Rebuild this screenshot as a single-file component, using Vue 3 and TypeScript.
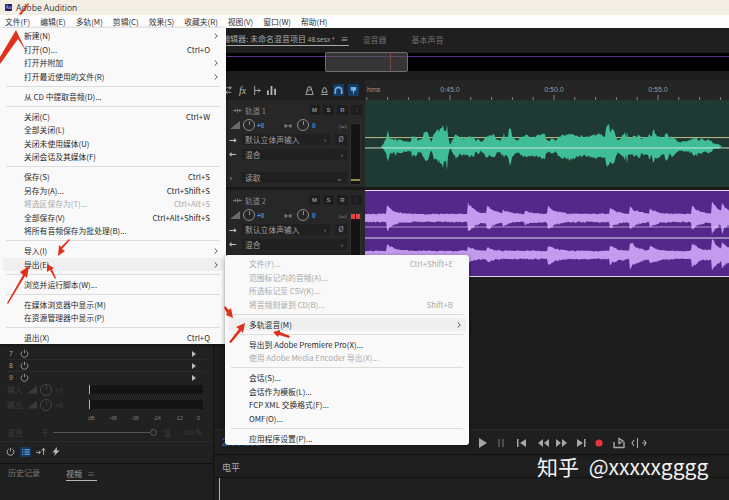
<script setup lang="ts">
interface MenuRow {
  label?: string
  shortcut?: string
  arrow?: boolean
  disabled?: boolean
  active?: boolean
  sep?: boolean
}

const menuBar = ['文件(F)', '编辑(E)', '多轨(M)', '剪辑(C)', '效果(S)', '收藏夹(R)', '视图(V)', '窗口(W)', '帮助(H)']

const fileMenu: MenuRow[] = [
  { label: '新建(N)', arrow: true },
  { label: '打开(O)...', shortcut: 'Ctrl+O' },
  { label: '打开并附加', arrow: true },
  { label: '打开最近使用的文件(R)', arrow: true },
  { sep: true },
  { label: '从 CD 中提取音频(D)...' },
  { sep: true },
  { label: '关闭(C)', shortcut: 'Ctrl+W' },
  { label: '全部关闭(L)' },
  { label: '关闭未使用媒体(U)' },
  { label: '关闭会话及其媒体(F)' },
  { sep: true },
  { label: '保存(S)', shortcut: 'Ctrl+S' },
  { label: '另存为(A)...', shortcut: 'Ctrl+Shift+S' },
  { label: '将选区保存为(T)...', shortcut: 'Ctrl+Alt+S', disabled: true },
  { label: '全部保存(V)', shortcut: 'Ctrl+Alt+Shift+S' },
  { label: '将所有音频保存为批处理(B)...' },
  { sep: true },
  { label: '导入(I)', arrow: true },
  { label: '导出(E)', arrow: true, active: true },
  { sep: true },
  { label: '浏览并运行脚本(W)...' },
  { sep: true },
  { label: '在媒体浏览器中显示(M)' },
  { label: '在资源管理器中显示(P)' },
  { sep: true },
  { label: '退出(X)', shortcut: 'Ctrl+Q' }
]

const exportMenu: MenuRow[] = [
  { label: '文件(F)...', shortcut: 'Ctrl+Shift+E', disabled: true },
  { label: '范围标记内的音频(A)...', disabled: true },
  { label: '所选标记至 CSV(K)...', disabled: true },
  { label: '将音频刻录到 CD(B)...', shortcut: 'Shift+B', disabled: true },
  { sep: true },
  { label: '多轨混音(M)', arrow: true, active: true },
  { sep: true },
  { label: '导出到 Adobe Premiere Pro(X)...' },
  { label: '使用 Adobe Media Encoder 导出(X)...', disabled: true },
  { sep: true },
  { label: '会话(S)...' },
  { label: '会话作为模板(L)...' },
  { label: 'FCP XML 交换格式(F)...' },
  { label: 'OMF(O)...' },
  { sep: true },
  { label: '应用程序设置(P)...' }
]

const tracks = [
  { name: '轨道 1', clip: 'green', meter: 'low' },
  { name: '轨道 2', clip: 'purple', meter: 'clip' }
]

// ruler ticks, one every 20.8px starting from the 0:45 mark
const ticks: { x: number; major: boolean }[] = []
for (let i = -4; i < 14; i++) {
  ticks.push({ x: 450 + i * 20.8, major: i % 5 === 0 })
}
const rulerLabels = [
  { x: 450, text: '0:45.0' },
  { x: 554, text: '0:50.0' },
  { x: 658, text: '0:55.0' }
]

const scale = [
  { x: 90, text: 'dB' },
  { x: 110, text: '-48' },
  { x: 132, text: '-36' },
  { x: 153, text: '-24' },
  { x: 175, text: '-12' },
  { x: 196, text: '0' }
]

function rng(seed: number) {
  let s = seed
  return () => {
    s = (s * 16807) % 2147483647
    return s / 2147483647
  }
}

function buildPath(amp: (x: number) => number, cy: number, seed: number, rough: number) {
  const r = rng(seed)
  const upper: string[] = []
  const lower: string[] = []
  let block = 0
  for (let x = 365; x <= 729; x += 1) {
    if (r() < 0.35) block = r()
    const h = amp(x) * (1 - rough * block)
    upper.push(`${x},${(cy - h * (0.88 + r() * 0.2)).toFixed(1)}`)
    lower.unshift(`${x},${(cy + h * (0.8 + r() * 0.3)).toFixed(1)}`)
  }
  return `M${upper.join(' L')} L${lower.join(' L')} Z`
}

const greenEnv: [number, number][] = [
  [365, 0], [381, 0], [383, 3], [386, 8], [388, 18], [391, 10], [400, 9], [408, 8], [415, 12], [421, 7],
  [424, 21], [427, 22], [431, 6], [436, 18], [439, 19], [444, 26], [447, 24], [450, 3], [456, 15], [460, 10],
  [466, 15], [472, 16], [480, 6], [490, 17], [500, 10], [510, 20], [517, 8], [525, 13], [540, 16], [555, 8],
  [570, 20], [585, 10], [600, 17], [612, 24], [618, 11], [625, 17], [640, 13], [655, 20], [670, 11], [680, 5],
  [700, 12], [715, 5], [722, 0], [729, 0]
]

function greenAmp(x: number) {
  for (let i = 1; i < greenEnv.length; i++) {
    const [x0, h0] = greenEnv[i - 1]
    const [x1, h1] = greenEnv[i]
    if (x <= x1) return h0 + ((h1 - h0) * (x - x0)) / (x1 - x0)
  }
  return 0
}

function purpleAmp(hits: [number, number][], base: number) {
  return (x: number) => {
    let h = base
    for (const [at, size] of hits) {
      if (x >= at) h += size * Math.exp(-(x - at) / 7)
    }
    return h
  }
}

const topHits: [number, number][] = [[387, 10], [468, 12], [487, 9], [503, 3], [525, 3], [548, 9], [610, 7], [630, 8], [650, 6], [692, 9], [712, 13], [722, 9]]
const bottomHits: [number, number][] = [[387, 8], [468, 5], [487, 3], [548, 7], [610, 6], [630, 10], [650, 5], [692, 9], [712, 12], [722, 8]]

const greenPath = buildPath(greenAmp, 147, 71, 0.5)
const purpleTop = buildPath(purpleAmp(topHits, 4.5), 218, 113, 0.15)
const purpleBottom = buildPath(purpleAmp(bottomHits, 4.5), 255, 257, 0.15)
</script>

<template>
  <div class="app">
    <header class="title-bar">
      <span class="au-logo">Au</span>
      <span class="title-text">Adobe Audition</span>
    </header>
    <nav class="menu-bar">
      <span v-for="item in menuBar" :key="item">{{ item }}</span>
    </nav>

    <main class="workspace">
      <aside class="left-col">
        <section class="effects">
          <div class="fx-list">
            <div v-for="n in [7, 8, 9]" :key="n" class="fx-row">
              <span class="fx-num">{{ n }}</span>
              <svg class="power" viewBox="0 0 10 10"><path d="M3 2.200a3.800 3.800 0 1 0 4 0M5 .8v4" /></svg>
              <span class="fx-play"></span>
            </div>
          </div>
          <div class="io-row">
            <span class="io-label">输入</span>
            <span class="ramp"></span>
            <span class="knob"></span>
            <span class="io-val">+0</span>
            <div class="level-meter"><i></i></div>
          </div>
          <div class="io-row">
            <span class="io-label">输出</span>
            <span class="ramp"></span>
            <span class="knob"></span>
            <span class="io-val">+0</span>
            <div class="level-meter"><i></i></div>
          </div>
          <div class="scale">
            <span v-for="s in scale" :key="s.text">{{ s.text }}</span>
          </div>
          <div class="mix-row">
            <span class="io-label">混合</span>
            <span class="mix-dry">干</span>
            <span class="mix-track"></span>
            <span class="mix-knob"></span>
            <span class="mix-wet">湿</span>
            <span class="mix-val">100 %</span>
          </div>
          <div class="fx-tools">
            <svg class="power bright" viewBox="0 0 10 10"><path d="M3 2.200a3.800 3.800 0 1 0 4 0M5 .8v4" /></svg>
            <span class="list-btn">
              <svg viewBox="0 0 10 8"><path d="M0 1h1.500M3 1h7M0 4h1.500M3 4h7M0 7h1.500M3 7h7" /></svg>
            </span>
            <svg class="tool" viewBox="0 0 12 10"><path d="M0 6h5M3.500 4l2 2-2 2M9 9V2M7 4l2-3 2 3" /></svg>
            <svg class="tool" viewBox="0 0 10 10"><path class="solid" d="M6 0L1 6h3l-1 4 6-6H6z" /></svg>
          </div>
        </section>
        <section class="history">
          <span class="dim-tab">历史记录</span>
          <span class="video-tab">视频<b>≡</b></span>
        </section>
      </aside>

      <section class="right-col">
        <div class="tabs">
          <span class="tab current">编辑器: 未命名混音项目 <small>48.sesx *</small><b>≡</b></span>
          <span class="tab mixer-tab">混音器</span>
          <span class="tab">基本声音</span>
        </div>
        <div class="overview">
          <div class="overview-band">
            <div class="overview-handle"><i></i></div>
          </div>
        </div>

        <div class="timeline">
          <div class="toolbar">
            <svg viewBox="0 0 8 10"><path d="M1 2h6M5 0l2 2-2 2M7 7H1M3 5L1 7l2 2" /></svg>
            <span class="fx-mark">fx</span>
            <svg viewBox="0 0 10 10"><path d="M3 0v10M3 5h6M7 3l2 2-2 2" /></svg>
            <svg viewBox="0 0 10 10"><path class="solid" d="M0 5h2v5H0zM4 0h2v10H4zM8 3h2v7H8z" /></svg>
            <span class="toolbar-gap"></span>
            <svg viewBox="0 0 10 10"><path d="M1 9.500h8L6.500 1h-3zM3 6l4-3" /></svg>
            <svg viewBox="0 0 10 10"><path d="M1 9.500h8M2 7h6L6 2H4z" /></svg>
            <span class="blue-btn">
              <svg viewBox="0 0 10 10"><path d="M1.500 9V5a3.500 3.500 0 0 1 7 0v4" /></svg>
            </span>
            <span class="blue-btn">
              <svg viewBox="0 0 10 10"><path class="solid-blue" d="M2 1h6v4H6L5 10 4 5H2z" /></svg>
            </span>
          </div>
          <svg class="ruler" viewBox="365 80 364 20">
            <text x="367" y="92" class="ruler-text">hms</text>
            <text v-for="l in rulerLabels" :key="l.text" :x="l.x" y="92" text-anchor="middle" class="ruler-text">{{ l.text }}</text>
            <line
              v-for="t in ticks"
              :key="t.x"
              :x1="t.x"
              :x2="t.x"
              :y1="t.major ? 95 : 97"
              y2="100"
              stroke="#9a9a9a"
              stroke-width="0.8"
            />
          </svg>

          <template v-for="track in tracks" :key="track.name">
            <div class="track-head" :class="track.clip">
              <div class="track-name">
                <svg class="track-icon" viewBox="0 0 12 6"><path d="M0 3h12M3 1v4M6 0v6M9 1v4" /></svg>
                <span>{{ track.name }}</span>
                <span class="track-btns">
                  <span class="msr">M</span>
                  <span class="msr">S</span>
                  <span class="msr">R</span>
                  <span class="msr off">I</span>
                </span>
              </div>
              <div class="track-body">
                <div class="track-controls">
                  <div class="vol-row">
                    <span class="ramp"></span>
                    <span class="knob bright"></span>
                    <span class="blue-val first">+0</span>
                    <span class="pan-mark">▶◀</span>
                    <span class="knob bright"></span>
                    <span class="blue-val">0</span>
                    <span class="link-mark">(∞)</span>
                  </div>
                  <div class="route-row">
                    <span class="route-arrow">→</span>
                    <span class="route-box short">默认立体声输入<i>›</i></span>
                    <span class="phase">Ø</span>
                  </div>
                  <div class="route-row">
                    <span class="route-arrow">←</span>
                    <span class="route-box">混合<i>›</i></span>
                  </div>
                  <!-- the second track's automation row sits behind the open menus -->
                  <div v-if="track.clip === 'green'" class="route-row read-row">
                    <span class="route-arrow small">›</span>
                    <span class="route-box">读取<i>⌄</i></span>
                  </div>
                </div>
                <div class="track-meter" :class="track.meter"><i></i><i></i></div>
              </div>
            </div>
            <div class="clip" :class="track.clip">
              <svg v-if="track.clip === 'green'" viewBox="365 100 364 88" preserveAspectRatio="none">
                <line x1="365" x2="729" y1="138" y2="138" stroke="#c2bb8a" stroke-width="1" />
                <path :d="greenPath" fill="#3fbd96" />
                <line x1="365" x2="729" y1="148.500" y2="148.500" stroke="#d8eee6" stroke-width="0.9" />
              </svg>
              <svg v-else viewBox="365 190 364 87" preserveAspectRatio="none">
                <path :d="purpleTop" fill="#c39bee" />
                <path :d="purpleBottom" fill="#c39bee" />
                <line x1="365" x2="729" y1="190.500" y2="190.500" stroke="#e3d7f0" stroke-width="1.200" />
                <line x1="365" x2="729" y1="227" y2="227" stroke="#d9c8ec" stroke-width="0.7" />
                <line x1="365" x2="729" y1="238" y2="238" stroke="#e3dcf3" stroke-width="1.100" />
                <line x1="365" x2="729" y1="276.500" y2="276.500" stroke="#e3d7f0" stroke-width="1" />
              </svg>
            </div>
          </template>
        </div>

        <div class="lower-space"></div>

        <div class="transport">
          <span class="timecode">2:03.203</span>
          <svg viewBox="0 0 170 12" class="transport-icons">
            <path d="M0 1l8 5-8 5z" fill="#a8a8a8" />
            <path d="M19 2h2v8h-2zM23 2h2v8h-2z" fill="#4e4e4e" />
            <path d="M38 2h1.500v8H38zM47 2v8l-6-4z" fill="#a8a8a8" />
            <path d="M64 2v8l-5-4zM70 2v8l-5-4z" fill="#a8a8a8" />
            <path d="M77 2v8l5-4zM83 2v8l5-4z" fill="#a8a8a8" />
            <path d="M98 2v8l6-4zM105 2h1.500v8H105z" fill="#a8a8a8" />
            <circle cx="120" cy="6" r="3.600" fill="#e8323f" />
            <path d="M135 5v5.500h10V5M140 1.500l4 2.500-4 2.500z" fill="none" stroke="#a8a8a8" stroke-width="1.400" />
            <path d="M155 3l-2 3 2 3M163 6h4M158.500 1v10M165 3l2 3-2 3" fill="none" stroke="#a8a8a8" stroke-width="1.100" />
          </svg>
        </div>

        <section class="levels">
          <div class="levels-tab">电平</div>
          <div class="levels-body"><i></i></div>
        </section>
      </section>
    </main>

    <!-- open menus -->
    <div class="menu file-menu">
      <template v-for="(row, i) in fileMenu" :key="i">
        <div v-if="row.sep" class="menu-sep"></div>
        <div v-else class="menu-item" :class="{ disabled: row.disabled, active: row.active }">
          <span>{{ row.label }}</span>
          <span v-if="row.shortcut">{{ row.shortcut }}</span>
          <svg v-if="row.arrow" class="chevron" viewBox="0 0 4 6"><path d="M.7.500L3.300 3 .7 5.500" /></svg>
        </div>
      </template>
    </div>
    <div class="menu export-menu">
      <template v-for="(row, i) in exportMenu" :key="i">
        <div v-if="row.sep" class="menu-sep"></div>
        <div v-else class="menu-item" :class="{ disabled: row.disabled, active: row.active }">
          <span>{{ row.label }}</span>
          <span v-if="row.shortcut">{{ row.shortcut }}</span>
          <svg v-if="row.arrow" class="chevron" viewBox="0 0 4 6"><path d="M.7.500L3.300 3 .7 5.500" /></svg>
        </div>
      </template>
    </div>

    <!-- red annotation arrows drawn over the screenshot -->
    <svg class="arrows" viewBox="0 0 729 500">
      <path d="M0 57L16 30 26 51 18 39 0 64z" />
      <path d="M19 14L28 3 29 4 21 15z" />
      <path d="M70 240L62 249 65 251 58 256 59 245 61 247 69 239z" />
      <path d="M7 303L23 275 20 272 29 266 27 278 25 276 8 304z" />
      <path d="M55 279L50 270 47 272 47 264 54 268 52 269 56 278z" />
      <path d="M225 306L229 310 231 308 233 318 226 315 227 313 224 308z" />
      <path d="M229 342L239 329 236 327 245 323 243 333 241 331 231 343z" />
      <path d="M289 338L279 335 278 337 273 332 280 330 280 332 290 336z" />
    </svg>

    <div class="watermark">知乎 @xxxxxgggg</div>
  </div>
</template>

<style>
html,
body {
  margin: 0;
  background: #1d1d1d;
}
</style>

<style scoped>
.app {
  position: relative;
  width: 729px;
  height: 500px;
  overflow: hidden;
  display: flex;
  flex-direction: column;
  font-family: "Noto Sans CJK SC", "Noto Sans", sans-serif;
  font-size: 8px;
  background: #1d1d1d;
}

.title-bar {
  height: 15px;
  flex: none;
  display: flex;
  align-items: center;
  gap: 4px;
  padding-left: 5px;
  background: #f3efe5;
  color: #333;
}

.au-logo {
  width: 7px;
  height: 7px;
  background: #1f1f4d;
  color: #a9a2ff;
  border-radius: 1px;
  font: 700 4.500px/7px "Liberation Sans", sans-serif;
  text-align: center;
}

.title-text {
  font: 8.500px "Open Sans", sans-serif;
}

.menu-bar {
  height: 13px;
  flex: none;
  display: flex;
  align-items: center;
  gap: 10px;
  padding-left: 5px;
  background: #fdfdfd;
  color: #333;
  font-size: 7.800px;
}

.workspace {
  flex: 1;
  min-height: 0;
  display: flex;
  gap: 1px;
  background: #111;
}

.left-col {
  width: 213px;
  flex: none;
  display: flex;
  flex-direction: column;
  justify-content: flex-end;
  gap: 1px;
}

.effects {
  height: 135px;
  padding: 20px 7px 0;
  box-sizing: border-box;
  background: #212121;
  display: flex;
  flex-direction: column;
}

.fx-list {
  height: 34px;
  overflow: hidden;
  flex: none;
}

.fx-row {
  height: 12px;
  display: flex;
  align-items: center;
  border-bottom: 1px solid #2b2b2b;
  box-sizing: border-box;
  padding: 0 0 0 2px;
  color: #a0a0a0;
  font-family: "Liberation Sans", sans-serif;
}

.fx-num {
  width: 11px;
  font-size: 7px;
}

.power {
  width: 9px;
  height: 9px;
  fill: none;
  stroke: #9a9a9a;
  stroke-width: 1;
}

.power.bright {
  margin-left: -1px;
  stroke: #b5b5b5;
}

.fx-play {
  margin-left: auto;
  margin-right: 10px;
  border-left: 4px solid #bbb;
  border-top: 3px solid transparent;
  border-bottom: 3px solid transparent;
}

.io-row {
  height: 15px;
  display: flex;
  align-items: center;
  color: #3f3f3f;
}

.io-label {
  width: 20px;
  font-size: 8px;
  color: #3f3f3f;
}

.ramp {
  width: 10px;
  height: 8px;
  flex: none;
  background: #3a3a3a;
  clip-path: polygon(0 100%, 100% 0, 100% 100%);
}

.knob {
  width: 10px;
  height: 10px;
  flex: none;
  margin-left: 3px;
  border: 1px solid #484848;
  border-radius: 50%;
  position: relative;
}

.knob::after {
  content: "";
  position: absolute;
  left: 4.500px;
  top: 1px;
  width: 1px;
  height: 4px;
  background: currentColor;
}

.knob.bright {
  border-color: #8d8d8d;
  color: #8d8d8d;
}

.io-val {
  margin-left: 3px;
  width: 33px;
  font-size: 7px;
  color: #414141;
}

.level-meter {
  width: 116px;
  height: 11px;
  background: #141414;
  border: 1px dotted #303030;
  box-sizing: border-box;
  position: relative;
}

.level-meter i {
  position: absolute;
  left: 0;
  top: 0;
  bottom: 0;
  width: 1px;
  background: #b9c25a;
}

.scale {
  margin-left: 81px;
  width: 112px;
  display: flex;
  justify-content: space-between;
  height: 13px;
  padding-top: 3px;
  box-sizing: border-box;
  color: #7c7c7c;
  font: 5.500px "Liberation Sans", sans-serif;
}

.mix-row {
  height: 14px;
  flex: none;
  display: flex;
  align-items: center;
  color: #3f3f3f;
}

.mix-dry {
  margin-left: 14px;
  width: 12px;
}

.mix-track {
  width: 97px;
  height: 1px;
  background: #565656;
}

.mix-knob {
  width: 5px;
  height: 5px;
  border: 1px solid #5a5a5a;
  border-radius: 50%;
}

.mix-wet {
  margin-left: 6px;
}

.mix-val {
  margin-left: auto;
  margin-right: 4px;
  font-size: 7px;
}

.fx-tools {
  height: 20px;
  flex: none;
  display: flex;
  align-items: center;
  gap: 5px;
  margin: 2px -7px 0;
  padding: 0 7px;
  border-top: 1px solid #2c2c2c;
  box-sizing: border-box;
}

.list-btn {
  width: 11px;
  height: 10px;
  display: flex;
  align-items: center;
  justify-content: center;
  background: #123a66;
  border-radius: 2px;
}

.list-btn svg {
  width: 8px;
  height: 6px;
  fill: none;
  stroke: #8fc3f5;
  stroke-width: 1.200;
}

.tool {
  width: 10px;
  height: 9px;
  fill: none;
  stroke: #b5b5b5;
  stroke-width: 1.100;
}

.solid {
  fill: #b5b5b5;
  stroke: none;
}

.history {
  height: 36px;
  flex: none;
  display: flex;
  align-items: flex-start;
  gap: 26px;
  padding: 3px 0 0 8px;
  box-sizing: border-box;
  background: #1f1f1f;
  color: #7b7b7b;
}

.video-tab {
  color: #a0a0a0;
  padding-right: 2px;
  border-bottom: 1px solid #b8b8b8;
  line-height: 13px;
  height: 13px;
}

.video-tab b {
  font-weight: 400;
  margin-left: 5px;
  color: #666;
}

.right-col {
  flex: 1;
  min-width: 0;
  display: flex;
  flex-direction: column;
  background: #1d1d1d;
}

.tabs {
  height: 22px;
  flex: none;
  display: flex;
  align-items: center;
  padding-left: 8px;
  gap: 25px;
  color: #6f6f6f;
  background: #1f1f1f;
}

.tab.current {
  color: #a8a8a8;
  border-bottom: 1px solid #aaa;
  line-height: 13px;
  white-space: nowrap;
}

.tab.current small {
  font: 6.500px "Liberation Sans", sans-serif;
}

.tab b {
  font-weight: 400;
  margin-left: 6px;
}

.mixer-tab {
  margin-left: -11px;
}

.overview {
  height: 30px;
  flex: none;
  padding-top: 3px;
  box-sizing: border-box;
}

.overview-band {
  height: 18px;
  background: linear-gradient(#000 3px, #5d2e8f 3px, #5d2e8f 4.500px, #000 4.500px);
  position: relative;
}

.overview-handle {
  position: absolute;
  left: 111px;
  top: -1px;
  width: 83px;
  height: 20px;
  box-sizing: border-box;
  background: rgba(88, 88, 88, 0.6);
  border: 1px solid #6f6f6f;
  border-radius: 2px;
}

.overview-handle i {
  position: absolute;
  left: 64px;
  top: 0;
  bottom: 0;
  width: 1px;
  background: #7c4545;
}

.timeline {
  display: grid;
  grid-template-columns: 151px 1fr;
  grid-template-rows: 20px 88px 89px;
  flex: none;
  background: #191919;
}

.toolbar {
  display: flex;
  align-items: center;
  gap: 6px;
  padding: 0 6px 0 10px;
  background: #1f1f1f;
}

.toolbar svg {
  width: 9px;
  height: 9px;
  fill: none;
  stroke: #b5b5b5;
  stroke-width: 1;
  flex: none;
}

.fx-mark {
  font: italic 10px "Liberation Serif", serif;
  color: #bbb;
}

.toolbar-gap {
  flex: 1;
}

.blue-btn {
  width: 11px;
  height: 12px;
  background: #153b63;
  border-radius: 1px;
  display: flex;
  align-items: center;
  justify-content: center;
  margin-left: -2px;
}

.toolbar .blue-btn svg {
  stroke: #6fb2f0;
  stroke-width: 1.800;
}

.toolbar .solid-blue {
  fill: #6fb2f0;
  stroke: none;
}

.ruler {
  display: block;
  width: 100%;
  height: 20px;
  background: #252525;
}

.ruler-text {
  font: 7px "Liberation Sans", sans-serif;
  fill: #9a9a9a;
}

.track-head {
  padding: 2.500px 4px 2px 16px;
  background: #272727;
  box-sizing: border-box;
  display: flex;
  flex-direction: column;
  color: #878787;
  overflow: hidden;
}

.track-head.green {
  margin-bottom: 1px;
}

.track-head.purple {
  margin-top: 2px;
}

.track-name {
  height: 15px;
  flex: none;
  display: flex;
  align-items: center;
  gap: 3px;
  padding-left: 3px;
  font-size: 7.500px;
}

.track-icon {
  width: 9px;
  height: 5px;
  fill: none;
  stroke: #9a9a9a;
  stroke-width: 0.8;
}

.track-btns {
  margin-left: auto;
  display: flex;
  gap: 3px;
  margin-right: -1px;
}

.msr {
  width: 11px;
  height: 10px;
  background: #1e1e1e;
  color: #8f8f8f;
  border-radius: 1px;
  text-align: center;
  font: 700 6px/10px "Liberation Sans", sans-serif;
}

.msr.off {
  color: #3a3a3a;
}

.track-body {
  flex: 1;
  min-height: 0;
  display: flex;
  gap: 3px;
}

.track-controls {
  flex: 1;
  min-width: 0;
}

.vol-row {
  height: 15px;
  display: flex;
  align-items: center;
}

.vol-row .ramp {
  background: #6b6b6b;
}

.blue-val {
  margin-left: 3px;
  color: #3d8ddb;
  font: 700 6.500px "Liberation Sans", sans-serif;
}

.blue-val.first {
  margin-left: 2px;
  width: 27px;
}

.pan-mark {
  width: 10px;
  font-size: 4.500px;
  color: #7a7a7a;
  letter-spacing: -1px;
}

.link-mark {
  margin-left: auto;
  font-size: 5px;
  color: #8a8a8a;
}

.route-row {
  height: 14.500px;
  display: flex;
  align-items: center;
}

.read-row {
  margin-top: 9px;
}

.route-arrow {
  width: 13px;
  margin-left: -1px;
  flex: none;
  font: 700 9px "DejaVu Sans", sans-serif;
  color: #c0c0c0;
}

.route-arrow.small {
  color: #777;
}

.route-box {
  flex: 1;
  height: 11px;
  display: flex;
  align-items: center;
  justify-content: space-between;
  padding: 0 4px 0 3px;
  background: #202020;
  color: #a0a0a0;
  font-size: 7.800px;
}

.route-box.short {
  margin-right: 5px;
}

.route-box i {
  font-style: normal;
  color: #888;
}

.phase {
  width: 12px;
  height: 11px;
  background: #202020;
  text-align: center;
  line-height: 11px;
  color: #999;
  font-size: 7px;
}

.track-meter {
  width: 11px;
  margin-top: 5px;
  background: #141414;
  border: 1px solid #303030;
  box-sizing: border-box;
  display: flex;
  position: relative;
}

.track-meter.low i {
  position: absolute;
  left: 0;
  right: 0;
  bottom: 3px;
  height: 2px;
  background: #8d8f3d;
}

.track-meter.clip {
  gap: 1px;
}

.track-meter.clip i {
  flex: 1;
  height: 5px;
  background: #e8414a;
}

.clip svg {
  display: block;
  width: 100%;
  height: 100%;
}

.clip.green {
  height: 87px;
  background: #1e3a32;
  overflow: hidden;
}

.clip.purple {
  height: 87px;
  margin-top: 2px;
  background: #54278a;
}

.lower-space {
  height: 153px;
  flex: none;
  background: #1c1c1c;
  border-bottom: 1px solid #2a2a2a;
  box-sizing: border-box;
}

.transport {
  height: 25px;
  flex: none;
  display: flex;
  align-items: center;
  background: #1f1f1f;
  border-bottom: 1px solid #111;
  box-sizing: border-box;
  padding-left: 8px;
  position: relative;
}

.timecode {
  color: #2f7fc9;
  font: 10px "Liberation Sans", sans-serif;
}

.transport-icons {
  position: absolute;
  left: 265px;
  top: 7px;
  width: 170px;
  height: 12px;
}

.levels {
  flex: 1;
  min-height: 0;
  margin-top: 3px;
  background: #1f1f1f;
  color: #aaa;
}

.levels-tab {
  height: 19px;
  line-height: 19px;
  padding-left: 8px;
  border-bottom: 1px solid #111;
  font-size: 9px;
}

.levels-body {
  padding-left: 5px;
  height: 22px;
}

.levels-body i {
  display: block;
  width: 1px;
  height: 100%;
  background: #b9c25a;
}

.menu {
  position: absolute;
  box-sizing: border-box;
  padding: 1px 0;
  background: #f9f9f9;
  color: #2a2a2a;
  font-size: 7.800px;
  box-shadow: 0 1px 4px rgba(0, 0, 0, 0.45);
}

.file-menu {
  left: 0;
  top: 28px;
  width: 226px;
  height: 316px;
}

.export-menu {
  left: 225px;
  top: 255px;
  width: 244px;
  height: 190px;
  padding-top: 2px;
  border-radius: 3px;
}

.menu-item {
  height: 13.500px;
  line-height: 13.500px;
  display: flex;
  justify-content: space-between;
  align-items: center;
  margin: 0 3px;
  padding: 0 13px 0 21px;
  border-radius: 2px;
  position: relative;
  white-space: nowrap;
}

.menu-item.active {
  background: #efefef;
}

.menu-item.disabled {
  color: #a9a9a9;
}

.menu-sep {
  height: 1px;
  margin: 2.750px 6px;
  background: #dcdcdc;
}

.chevron {
  position: absolute;
  right: 5px;
  top: 4px;
  width: 4px;
  height: 6px;
  fill: none;
  stroke: #444;
  stroke-width: 0.9;
}

.arrows {
  position: absolute;
  inset: 0;
  width: 729px;
  height: 500px;
  fill: #e0301e;
  pointer-events: none;
}

.watermark {
  position: absolute;
  left: 537px;
  top: 452px;
  color: #f2f2f2;
  font-size: 21px;
  line-height: 28px;
  word-spacing: 5px;
  white-space: nowrap;
}
</style>
